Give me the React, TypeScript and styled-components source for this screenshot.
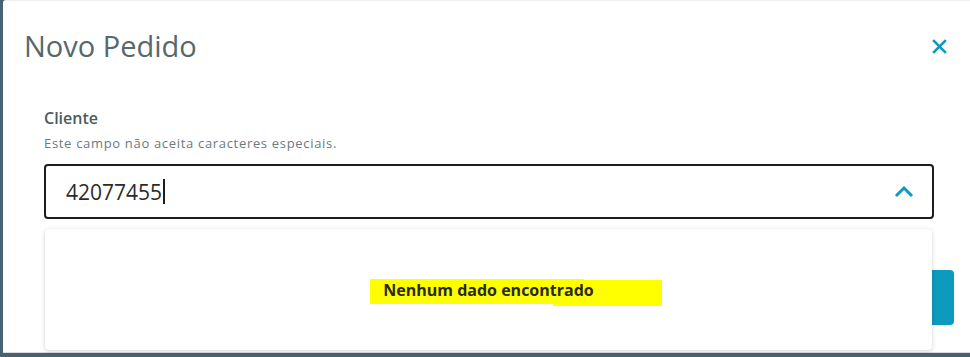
import React from 'react';
import styled, { createGlobalStyle } from 'styled-components';

const GlobalStyle = createGlobalStyle`
	html, body {
		margin: 0;
		padding: 0;
		background: #476270;
		font-family: 'Open Sans', 'Noto Sans', sans-serif;
	}
`

const Page = styled.div`
	width: 970px;
	height: 357px;
	padding-left: 3px;
	box-sizing: border-box;
	overflow: hidden;
`

const Modal = styled.div`
	position: relative;
	height: 353px;
	background: #fff;
	border-top: 1px solid #eeeeee;
	border-bottom: 1px solid #d9dcdd;
	border-top-left-radius: 3px;
	box-sizing: border-box;
	display: flex;
	flex-direction: column;
`

const Header = styled.div`
	display: flex;
	align-items: center;
	justify-content: space-between;
	padding: 27px 22px 0 21px;
	height: 36px;
`

const Title = styled.h2`
	margin: 0;
	font-size: 29px;
	font-weight: 400;
	color: #56686d;
	line-height: 36px;
`

const Close = styled.button`
	border: none;
	background: none;
	padding: 0;
	width: 18px;
	height: 18px;
	display: flex;
	align-items: center;
	justify-content: center;
	cursor: pointer;
`

const Body = styled.div`
	padding: 43px 36px 0 41px;
`

const Label = styled.div`
	font-size: 16px;
	font-weight: 600;
	color: #4a5c60;
	line-height: 22px;
`

const Helper = styled.div`
	font-size: 13px;
	letter-spacing: 0.68px;
	color: #6b7a7f;
	line-height: 18px;
	margin-top: 5px;
`

const Field = styled.div`
	position: relative;
	margin-top: 12px;
`

const InputBox = styled.div`
	height: 55px;
	border: 2px solid #1d1d1d;
	border-radius: 4px;
	box-sizing: border-box;
	display: flex;
	align-items: center;
	justify-content: space-between;
	padding: 0 18px 0 20px;
`

const Value = styled.span`
	font-size: 21px;
	color: #2b2b2b;
	display: flex;
	align-items: center;
	&::after {
		content: '';
		width: 1.5px;
		height: 25px;
		background: #1d1d1d;
		margin-left: 1px;
	}
`

const Dropdown = styled.div`
	position: absolute;
	z-index: 2;
	top: 65px;
	left: 1px;
	right: 2px;
	height: 121px;
	background: #fff;
	border-radius: 4px;
	box-shadow: 0 1px 4px rgba(0, 0, 0, 0.18);
	display: flex;
	align-items: center;
	justify-content: center;
`

const Empty = styled.span`
	position: relative;
	font-size: 16px;
	font-weight: 700;
	color: #2a2a1a;
	&::before {
		content: '';
		position: absolute;
		z-index: 0;
		left: -13px;
		right: 10px;
		top: 0;
		bottom: -3px;
		background: #ffff00;
	}
	&::after {
		content: '';
		position: absolute;
		z-index: 0;
		left: 170px;
		right: -68px;
		top: 1px;
		bottom: -5px;
		background: #ffff00;
	}
`

const EmptyText = styled.span`
	position: relative;
	z-index: 1;
`

const Actions = styled.div`
	display: flex;
	justify-content: flex-end;
	margin-top: 51px;
	margin-right: -20px;
`

const Button = styled.button`
	width: 120px;
	height: 55px;
	border: none;
	border-radius: 4px;
	background: #0c9abe;
	color: #fff;
`

const App = () => {
	return (
		<React.Fragment>
			<GlobalStyle />
			<Page>
				<Modal>
					<Header>
						<Title>Novo Pedido</Title>
						<Close>
							<svg width="17" height="17" viewBox="0 0 16 16">
								<path d="M2 2 L14 14 M14 2 L2 14" stroke="#0c9abe" strokeWidth="2.5" strokeLinecap="butt" />
							</svg>
						</Close>
					</Header>
					<Body>
						<Label>Cliente</Label>
						<Helper>Este campo não aceita caracteres especiais.</Helper>
						<Field>
							<InputBox>
								<Value>42077455</Value>
								<svg width="20" height="13" viewBox="0 0 20 13">
									<path d="M2 11 L10 3 L18 11" fill="none" stroke="#0c9abe" strokeWidth="3" />
								</svg>
							</InputBox>
							<Dropdown>
								<Empty>
									<EmptyText>Nenhum dado encontrado</EmptyText>
								</Empty>
							</Dropdown>
						</Field>
						<Actions>
							<Button>Salvar</Button>
						</Actions>
					</Body>
				</Modal>
			</Page>
		</React.Fragment>
	);
};

export default App;
